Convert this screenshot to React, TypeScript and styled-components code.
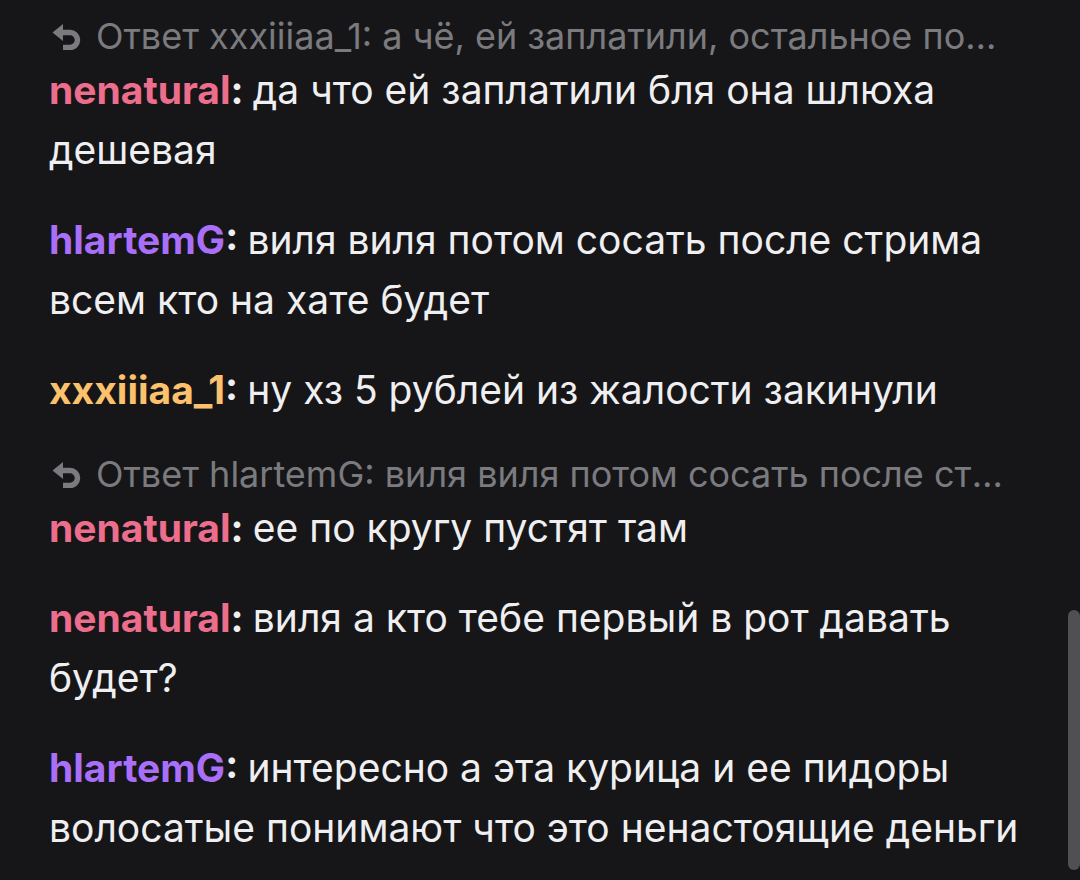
import React from 'react';
import styled, {createGlobalStyle} from 'styled-components';

type Message = {
    id: number;
    user: string;
    color: string;
    text: string;
    reply?: {user: string; text: string};
};

const messages: Message[] = [
    {
        id: 1,
        user: 'nenatural',
        color: '#ec6e8c',
        text: 'да что ей заплатили бля она шлюха дешевая',
        reply: {user: 'xxxiiiaa_1', text: 'а чё, ей заплатили, остальное пофиг уже'},
    },
    {id: 2, user: 'hlartemG', color: '#a96ff8', text: 'виля виля потом сосать после стрима всем кто на хате будет'},
    {id: 3, user: 'xxxiiiaa_1', color: '#fbc16c', text: 'ну хз 5 рублей из жалости закинули'},
    {
        id: 4,
        user: 'nenatural',
        color: '#ec6e8c',
        text: 'ее по кругу пустят там',
        reply: {user: 'hlartemG', text: 'виля виля потом сосать после стрима всем кто на хате будет'},
    },
    {id: 5, user: 'nenatural', color: '#ec6e8c', text: 'виля а кто тебе первый в рот давать будет?'},
    {id: 6, user: 'hlartemG', color: '#a96ff8', text: 'интересно а эта курица и ее пидоры волосатые понимают что это ненастоящие деньги'},
];

const ReplyIcon: React.FunctionComponent = () => (
    <svg width="30" height="26" viewBox="0 0 30 26" fill="none">
        <path d="M0.5 8.5 L11 0 L11 17 Z" fill="currentColor"/>
        <path d="M8 8.5 H18 A7.5 7.5 0 0 1 18 23.5 H11" stroke="currentColor" strokeWidth="5.5"/>
    </svg>
);

const App: React.FunctionComponent = () => {
    return (
        <Wrapper>
            <GlobalStyle/>
            <Chat>
                {messages.map((m) => (
                    <Entry key={m.id}>
                        {m.reply && (
                            <Reply>
                                <ReplyIcon/>
                                <span>Ответ {m.reply.user}: {m.reply.text}</span>
                            </Reply>
                        )}
                        <Line>
                            <Name $color={m.color}>{m.user}</Name>
                            <Colon>: </Colon>
                            {m.text}
                        </Line>
                    </Entry>
                ))}
            </Chat>
            <Thumb/>
        </Wrapper>
    );
}

const GlobalStyle = createGlobalStyle`
    html, body {
        margin: 0;
        padding: 0;
        background: #161618;
    }
`;

const Wrapper = styled.div`
    position: relative;
    width: 1080px;
    height: 880px;
    overflow: hidden;
    background: #161618;
    font-family: Inter, "Noto Sans", sans-serif;
`;

const Chat = styled.div`
    display: flex;
    flex-direction: column;
    gap: 30px;
    padding: 12px 55px 0 49px;
`;

const Entry = styled.div`
    display: flex;
    flex-direction: column;
`;

const Reply = styled.div`
    display: flex;
    align-items: center;
    gap: 14px;
    height: 48px;
    margin-right: 19px;
    padding-left: 3px;
    color: #7b7b7f;
    font-size: 36px;
    white-space: nowrap;
    span {
        overflow: hidden;
        text-overflow: ellipsis;
    }
    svg {
        flex-shrink: 0;
        margin-top: 2px;
    }
`;

const Line = styled.div`
    color: #efeff1;
    font-size: 39px;
    line-height: 60px;
`;

const Name = styled.span<{$color: string}>`
    color: ${(p) => p.$color};
    font-weight: 700;
`;

const Colon = styled.span`
    font-weight: 700;
`;

const Thumb = styled.div`
    position: absolute;
    right: 0;
    top: 610px;
    width: 12px;
    height: 260px;
    border-radius: 6px;
    background: #505053;
`;

export default App;
